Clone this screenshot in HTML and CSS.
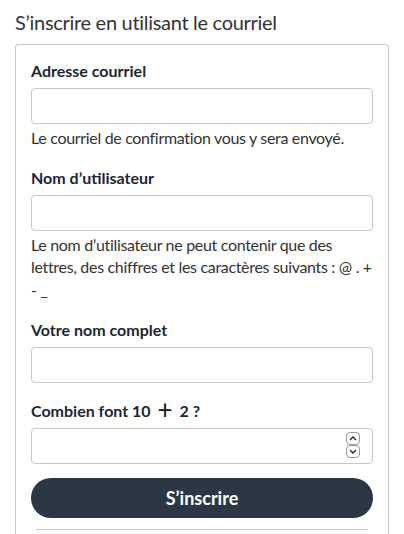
FILE: index.html
```html
<!DOCTYPE html>
<html lang="fr">
<head>
<meta charset="utf-8">
<title>S’inscrire</title>
<link rel="stylesheet" href="styles.css">
</head>
<body>
<main class="page">
  <h2 class="title">S’inscrire en utilisant le courriel</h2>
  <form class="card">
    <div class="group">
      <label class="label" for="email">Adresse courriel</label>
      <input class="input" id="email" type="email">
      <p class="help">Le courriel de confirmation vous y sera envoyé.</p>
    </div>
    <div class="group">
      <label class="label" for="user">Nom d’utilisateur</label>
      <input class="input" id="user" type="text">
      <p class="help">Le nom d’utilisateur ne peut contenir que des lettres, des chiffres et les caractères suivants : @ . + - _</p>
    </div>
    <div class="group">
      <label class="label" for="name">Votre nom complet</label>
      <input class="input" id="name" type="text">
    </div>
    <div class="group">
      <label class="label" for="captcha">Combien font 10 <span class="op">+</span> 2 ?</label>
      <div class="num">
        <input class="input" id="captcha" type="number">
        <div class="spin" aria-hidden="true">
          <span class="spin-btn"><svg width="8" height="5" viewBox="0 0 8 5"><path d="M1 4 L4 1 L7 4" fill="none" stroke="#222" stroke-width="1.3"/></svg></span>
          <span class="spin-btn"><svg width="8" height="5" viewBox="0 0 8 5"><path d="M1 1 L4 4 L7 1" fill="none" stroke="#222" stroke-width="1.3"/></svg></span>
        </div>
      </div>
    </div>
    <button class="btn" type="button">S’inscrire</button>
    <hr class="rule">
  </form>
</main>
</body>
</html>
```
FILE: styles.css
```css
* { box-sizing: border-box; }
html, body { margin: 0; padding: 0; background: #fff; }
body {
  font-family: Lato, "Noto Sans", "Liberation Sans", sans-serif;
  font-size: 16px;
  line-height: 24px;
  color: #333;
}
.page { padding: 10px 15px 0; }
.title {
  margin: 0 0 10px;
  font-size: 20px;
  line-height: 24px;
  font-weight: 400;
  letter-spacing: -0.3px;
  color: #333;
}
.card {
  border: 1px solid #c8c8c8;
  border-bottom: none;
  border-radius: 4px 4px 0 0;
  padding: 14px 15px 4px;
  height: 500px;
}
.group { margin-bottom: 16px; }
.label {
  display: block;
  font-weight: 700;
  color: #1c2733;
  margin-bottom: 5px;
  line-height: 24px;
}
.op {
  font-weight: 400;
  font-size: 26px;
  line-height: 0;
  color: #111;
  vertical-align: -2px;
  margin: 0 3px;
}
.input {
  display: block;
  width: 100%;
  height: 36px;
  border: 1px solid #c8c8c8;
  border-radius: 4px;
  padding: 4px 10px;
  font: inherit;
  background: #fff;
}
.num { position: relative; }
.num .input::-webkit-inner-spin-button,
.num .input::-webkit-outer-spin-button { -webkit-appearance: none; margin: 0; }
.spin {
  position: absolute;
  right: 13px;
  top: 4px;
  display: flex;
  flex-direction: column;
  gap: 0;
}
.spin-btn {
  width: 14px;
  height: 13px;
  border: 1px solid #9a9a9a;
  border-radius: 4px;
  background: #fff;
  display: flex;
  align-items: center;
  justify-content: center;
}
.help {
  margin: 3px 0 0;
  color: #333;
  line-height: 22.7px;
  letter-spacing: -0.32px;
}
.btn {
  display: block;
  width: 100%;
  height: 40px;
  margin-top: -2px;
  border: none;
  border-radius: 20px;
  background: #2b3744;
  color: #fff;
  font-family: inherit;
  font-size: 18px;
  font-weight: 700;
}
.rule {
  margin: 11px 5px 0;
  border: none;
  border-top: 1px solid #c8c8c8;
}
```
